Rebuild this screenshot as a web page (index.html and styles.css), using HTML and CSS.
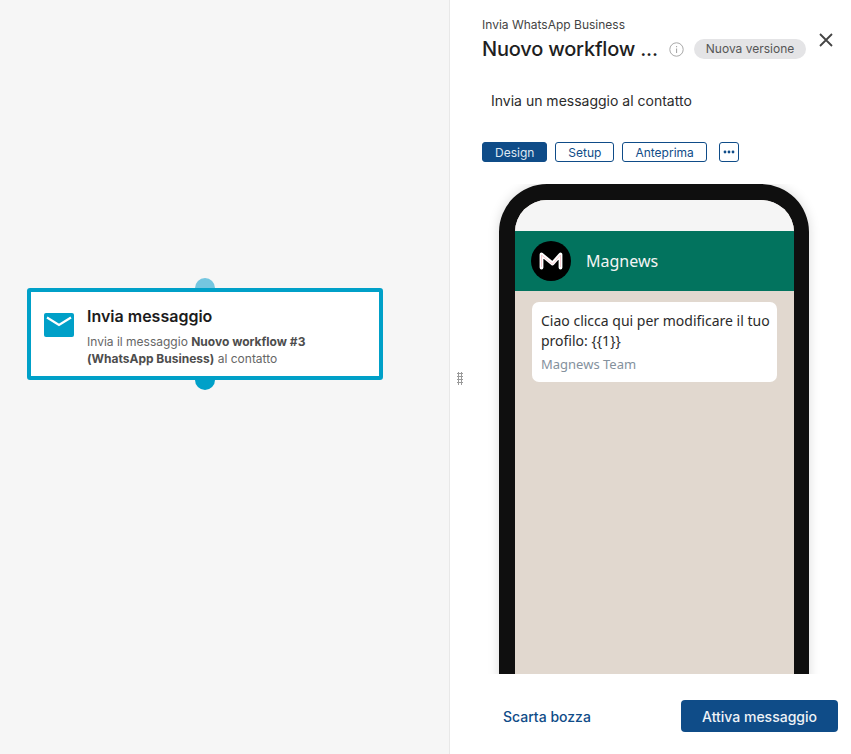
FILE: index.html
```html
<!DOCTYPE html>
<html lang="it">
<head>
    <meta charset="UTF-8">
    <title>Invia WhatsApp Business</title>
    <link rel="stylesheet" href="styles.css">
</head>
<body>
    <div class="app">
        <div class="canvas">
            <div class="node">
                <span class="dot dot-top"></span>
                <span class="dot dot-bottom"></span>
                <div class="node-box">
                    <svg class="node-icon" width="30" height="24" viewBox="0 0 30 24">
                        <rect width="30" height="24" rx="2" fill="#00a0c8"/>
                        <path d="M3 4.5 L15 12 L27 4.5" fill="none" stroke="#fff" stroke-width="2.2"/>
                    </svg>
                    <div>
                        <div class="node-title">Invia messaggio</div>
                        <div class="node-text">Invia il messaggio <b>Nuovo workflow #3 (WhatsApp Business)</b> al contatto</div>
                    </div>
                </div>
            </div>
        </div>

        <div class="panel">
            <div class="handle"></div>
            <div class="panel-head">
                <div class="eyebrow">Invia WhatsApp Business</div>
                <div class="title-row">
                    <h1>Nuovo workflow ...</h1>
                    <svg class="info" width="15" height="15" viewBox="0 0 15 15">
                        <circle cx="7.5" cy="7.5" r="6.7" fill="none" stroke="#a8a8a8" stroke-width="1"/>
                        <rect x="7" y="6.5" width="1.1" height="4.5" fill="#a8a8a8"/>
                        <rect x="7" y="4" width="1.1" height="1.2" fill="#a8a8a8"/>
                    </svg>
                    <span class="badge">Nuova versione</span>
                </div>
                <svg class="close" width="16" height="16" viewBox="0 0 16 16">
                    <path d="M2 2 L14 14 M14 2 L2 14" stroke="#444" stroke-width="1.8" fill="none"/>
                </svg>
            </div>

            <p class="subtitle">Invia un messaggio al contatto</p>

            <div class="tabs">
                <button class="tab active">Design</button>
                <button class="tab">Setup</button>
                <button class="tab">Anteprima</button>
                <button class="tab more">
                    <svg width="12" height="4" viewBox="0 0 12 4">
                        <circle cx="2" cy="2" r="1.4" fill="#0f4c88"/>
                        <circle cx="6" cy="2" r="1.4" fill="#0f4c88"/>
                        <circle cx="10" cy="2" r="1.4" fill="#0f4c88"/>
                    </svg>
                </button>
            </div>

            <div class="preview">
                <div class="phone">
                    <div class="status"></div>
                    <div class="wa-head">
                        <div class="avatar">
                            <svg width="26" height="20" viewBox="0 0 26 20">
                                <path d="M3.5 16.5 V3.5 L14.5 12.5 L22.5 3.5 V16.5" fill="none" stroke="#fff" stroke-width="3.8" stroke-linejoin="round" stroke-linecap="round"/>
                                <path d="M3.5 16 V4 L14.5 13 L22.5 4 V16" fill="none" stroke="#f7b6c0" stroke-width="0.7"/>
                            </svg>
                        </div>
                        <span>Magnews</span>
                    </div>
                    <div class="wa-body">
                        <div class="bubble">
                            <div class="bubble-text">Ciao clicca qui per modificare il tuo profilo: {{1}}</div>
                            <div class="bubble-foot">Magnews Team</div>
                        </div>
                    </div>
                </div>
            </div>

            <div class="footer">
                <a class="discard">Scarta bozza</a>
                <button class="primary">Attiva messaggio</button>
            </div>
        </div>
    </div>
</body>
</html>
```

FILE: styles.css
```css
* {
    box-sizing: border-box;
}
html, body {
    margin: 0;
    height: 100%;
}
body {
    font-family: Inter, "Liberation Sans", sans-serif;
    color: #1f1f1f;
    background: #fff;
    overflow: hidden;
}
.app {
    display: flex;
    height: 754px;
}
.canvas {
    position: relative;
    width: 450px;
    flex: none;
    background: #f6f6f6;
    border-right: 1px solid #e8e8e8;
}
.node {
    position: absolute;
    left: 27px;
    top: 288px;
    width: 356px;
    height: 92px;
}
.node-box {
    position: relative;
    display: flex;
    align-items: flex-start;
    gap: 13px;
    height: 100%;
    padding: 14px 13px 0;
    background: #fff;
    border: 4px solid #00a0c8;
    border-radius: 3px;
}
.dot {
    position: absolute;
    left: 168px;
    width: 20px;
    height: 20px;
    border-radius: 50%;
}
.dot-top {
    top: -10px;
    background: #74c6e0;
}
.dot-bottom {
    bottom: -10px;
    background: #00a0c8;
}
.node-icon {
    flex: none;
    margin-top: 7px;
}
.node-title {
    font-size: 16px;
    font-weight: 600;
    line-height: 20px;
    color: #1c1c1c;
}
.node-text {
    width: 245px;
    margin-top: 7px;
    font-size: 12px;
    line-height: 17px;
    color: #666;
}
.node-text b {
    font-weight: 700;
    color: #4d4d4d;
}
.panel {
    position: relative;
    flex: 1;
    display: flex;
    flex-direction: column;
}
.handle {
    position: absolute;
    left: 7px;
    top: 372px;
    width: 6px;
    height: 13px;
    background-image: radial-gradient(circle, #9a9a9a 1px, transparent 1.1px);
    background-size: 3px 3px;
}
.panel-head {
    position: relative;
    padding: 17px 0 0 32px;
}
.eyebrow {
    font-size: 12px;
    line-height: 15px;
    color: #444;
}
.title-row {
    display: flex;
    align-items: center;
    margin-top: 4px;
    height: 26px;
}
h1 {
    margin: 0;
    font-size: 20px;
    font-weight: 500;
    letter-spacing: -0.2px;
    color: #1f1f1f;
}
.info {
    margin-left: 11px;
}
.badge {
    margin-left: 10px;
    padding: 0 12px;
    height: 20px;
    line-height: 20px;
    border-radius: 10px;
    background: #e4e4e6;
    font-size: 12px;
    color: #555;
}
.close {
    position: absolute;
    right: 17px;
    top: 32px;
}
.subtitle {
    margin: 29px 0 0 41px;
    font-size: 14px;
    line-height: 20px;
    color: #2b2b2b;
}
.tabs {
    display: flex;
    gap: 8px;
    margin: 31px 0 0 32px;
}
.tab {
    height: 20px;
    padding: 0 12px;
    border: 1px solid #0f4c88;
    border-radius: 3px;
    background: #fff;
    font-family: inherit;
    font-size: 12px;
    color: #0f4c88;
}
.tab.active {
    background: #0f4c88;
    color: #dfe8f2;
}
.tab.more {
    display: flex;
    align-items: center;
    justify-content: center;
    width: 20px;
    padding: 0;
    margin-left: 4px;
}
.preview {
    height: 490px;
    margin-top: 22px;
    padding-left: 49px;
    overflow: hidden;
}
.phone {
    width: 310px;
    height: 600px;
    border: 16px solid #0f0f0f;
    border-right-width: 15px;
    border-radius: 48px;
    overflow: hidden;
    background: #e1d8cf;
    box-shadow: 0 0 12px rgba(0, 0, 0, 0.15);
}
.status {
    height: 31px;
    background: #f5f5f5;
}
.wa-head {
    display: flex;
    align-items: center;
    gap: 15px;
    height: 60px;
    padding-left: 16px;
    background: #02735e;
    font-family: "Noto Sans", sans-serif;
    font-size: 16px;
    color: #f4f4f4;
}
.avatar {
    display: flex;
    align-items: center;
    justify-content: center;
    width: 40px;
    height: 40px;
    border-radius: 50%;
    background: #000;
}
.wa-body {
    padding: 11px 17px;
    font-family: "Noto Sans", sans-serif;
}
.bubble {
    height: 80px;
    padding: 9px 4px 0 9px;
    background: #fff;
    border-radius: 7px;
}
.bubble-text {
    font-size: 14px;
    line-height: 20px;
    color: #2b2b2b;
}
.bubble-foot {
    margin-top: 4px;
    font-size: 13px;
    line-height: 18px;
    color: #84919d;
}
.footer {
    display: flex;
    align-items: center;
    justify-content: space-between;
    padding: 26px 13px 0 53px;
}
.discard {
    font-size: 14px;
    font-weight: 500;
    color: #0f4c88;
}
.primary {
    width: 157px;
    height: 32px;
    border: none;
    border-radius: 4px;
    background: #0f4c88;
    font-family: inherit;
    font-size: 14px;
    font-weight: 500;
    color: #eef2f7;
}
```
